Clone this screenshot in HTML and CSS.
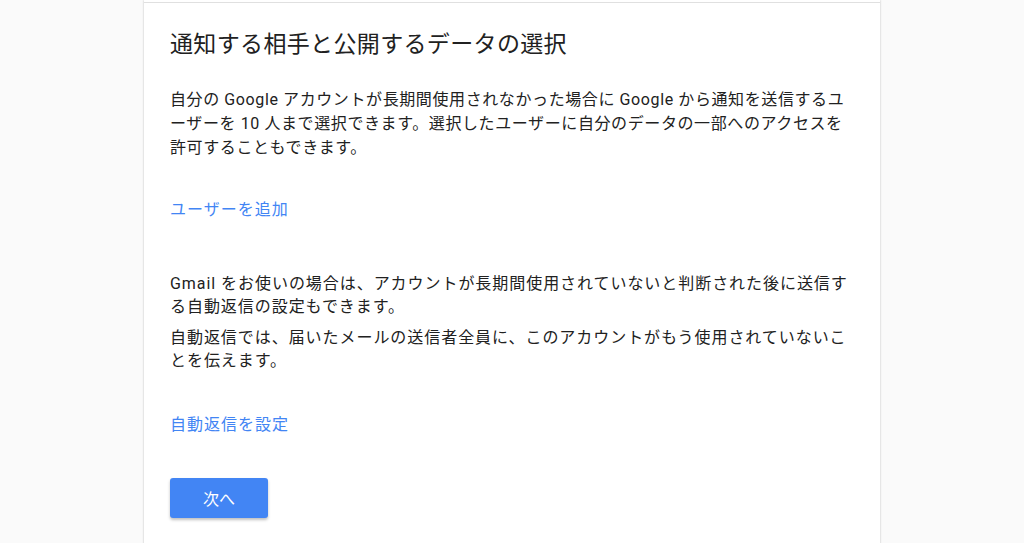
FILE: index.html
```html
<!DOCTYPE html>
<html lang="ja">

<head>
    <meta charset="UTF-8" />
    <meta name="viewport" content="width=device-width, initial-scale=1.0" />
    <title>通知する相手と公開するデータの選択</title>
    <link rel="stylesheet" href="styles.css">
</head>

<body>
    <div class="card">
        <div class="section">
            <h1>通知する相手と公開するデータの選択</h1>
            <p class="desc">自分の Google アカウントが長期間使用されなかった場合に Google から通知を送信するユーザーを 10 人まで選択できます。選択したユーザーに自分のデータの一部へのアクセスを許可することもできます。</p>
            <a href="#" class="link link-add">ユーザーを追加</a>

            <div class="gmail">
                <p class="desc">Gmail をお使いの場合は、アカウントが長期間使用されていないと判断された後に送信す<br>る自動返信の設定もできます。</p>
                <p class="desc">自動返信では、届いたメールの送信者全員に、このアカウントがもう使用されていないこ<br>とを伝えます。</p>
            </div>
            <a href="#" class="link link-reply">自動返信を設定</a>

            <button id="next">次へ</button>
        </div>
    </div>
</body>

</html>
```

FILE: styles.css
```css
body {
    margin: 0;
    background-color: #fafafa;
    font-family: Roboto, 'Noto Sans CJK JP', sans-serif;
    color: #212121;
}

.card {
    width: 736px;
    margin: 0 auto;
    padding-top: 2px;
    min-height: 543px;
    box-sizing: border-box;
    background-color: white;
    box-shadow: 0 0 2px rgba(0, 0, 0, 0.25);
}

.section {
    border-top: 1px solid #e0e0e0;
    padding: 26px 30px 40px 26px;
    display: flex;
    flex-direction: column;
    align-items: flex-start;
}

h1 {
    margin: 0 0 27px;
    font-size: 23px;
    font-weight: 400;
    line-height: 32px;
    letter-spacing: 0.35px;
    color: #212121;
}

.desc {
    margin: 0;
    font-size: 16px;
    line-height: 24px;
    letter-spacing: 0.6px;
}

.gmail .desc {
    letter-spacing: 0.95px;
    line-height: 23px;
}

.link {
    font-size: 16px;
    line-height: 24px;
    color: #4285f4;
    text-decoration: none;
    letter-spacing: 1px;
}

.link-add {
    margin-top: 38px;
}

.gmail {
    margin-top: 50px;
    display: flex;
    flex-direction: column;
    gap: 8px;
}

.link-reply {
    margin-top: 41px;
}

button {
    margin-top: 41px;
    width: 98px;
    height: 40px;
    border: none;
    border-radius: 3px;
    background-color: #4285f4;
    color: white;
    font-family: inherit;
    font-size: 16px;
    box-shadow: 0 2px 3px rgba(0, 0, 0, 0.25);
    cursor: pointer;
}
```
